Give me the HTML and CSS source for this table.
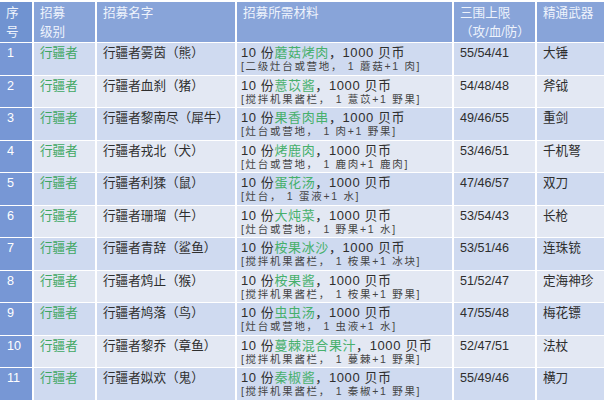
FILE: index.html
```html
<!DOCTYPE html>
<html lang="zh">
<head>
<meta charset="utf-8">
<link rel="stylesheet" href="styles.css">
</head>
<body>
<table class="tbl">
  <colgroup>
    <col class="c1"><col class="c2"><col class="c3"><col class="c4"><col class="c5"><col class="c6">
  </colgroup>
  <thead>
    <tr>
      <th class="num">序号</th>
      <th>招募<br>级别</th>
      <th>招募名字</th>
      <th>招募所需材料</th>
      <th>三围上限<br>（攻/血/防）</th>
      <th>精通武器</th>
    </tr>
  </thead>
  <tbody>
    <tr class="odd"><td class="num">1</td><td class="lvl">行疆者</td><td>行疆者雾茵（熊）</td><td class="mat">10 份<span class="food">蘑菇烤肉</span>，1000 贝币<div class="sub">[二级灶台或营地， 1 蘑菇+1 肉]</div></td><td>55/54/41</td><td>大锤</td></tr>
    <tr class="even"><td class="num">2</td><td class="lvl">行疆者</td><td>行疆者血刹（猪）</td><td class="mat">10 份<span class="food">薏苡酱</span>，1000 贝币<div class="sub">[搅拌机果酱栏， 1 薏苡+1 野果]</div></td><td>54/48/48</td><td>斧钺</td></tr>
    <tr class="odd"><td class="num">3</td><td class="lvl">行疆者</td><td>行疆者黎南尽（犀牛）</td><td class="mat">10 份<span class="food">果香肉串</span>，1000 贝币<div class="sub">[灶台或营地， 1 肉+1 野果]</div></td><td>49/46/55</td><td>重剑</td></tr>
    <tr class="even"><td class="num">4</td><td class="lvl">行疆者</td><td>行疆者戎北（犬）</td><td class="mat">10 份<span class="food">烤鹿肉</span>，1000 贝币<div class="sub">[灶台或营地， 1 鹿肉+1 鹿肉]</div></td><td>53/46/51</td><td>千机弩</td></tr>
    <tr class="odd"><td class="num">5</td><td class="lvl">行疆者</td><td>行疆者利猱（鼠）</td><td class="mat">10 份<span class="food">蛋花汤</span>，1000 贝币<div class="sub">[灶台， 1 蛋液+1 水]</div></td><td>47/46/57</td><td>双刀</td></tr>
    <tr class="even"><td class="num">6</td><td class="lvl">行疆者</td><td>行疆者珊瑠（牛）</td><td class="mat">10 份<span class="food">大炖菜</span>，1000 贝币<div class="sub">[灶台或营地， 1 野果+1 水]</div></td><td>53/54/43</td><td>长枪</td></tr>
    <tr class="odd"><td class="num">7</td><td class="lvl">行疆者</td><td>行疆者青辞（鲨鱼）</td><td class="mat">10 份<span class="food">桉果冰沙</span>，1000 贝币<div class="sub">[搅拌机果酱栏， 1 桉果+1 冰块]</div></td><td>53/51/46</td><td>连珠铳</td></tr>
    <tr class="even"><td class="num">8</td><td class="lvl">行疆者</td><td>行疆者鸩止（猴）</td><td class="mat">10 份<span class="food">桉果酱</span>，1000 贝币<div class="sub">[搅拌机果酱栏， 1 桉果+1 野果]</div></td><td>51/52/47</td><td>定海神珍</td></tr>
    <tr class="odd"><td class="num">9</td><td class="lvl">行疆者</td><td>行疆者鸠落（鸟）</td><td class="mat">10 份<span class="food">虫虫汤</span>，1000 贝币<div class="sub">[灶台或营地， 1 虫液+1 水]</div></td><td>47/55/48</td><td>梅花镖</td></tr>
    <tr class="even"><td class="num">10</td><td class="lvl">行疆者</td><td>行疆者黎乔（章鱼）</td><td class="mat">10 份<span class="food">蔓棘混合果汁</span>，1000 贝币<div class="sub">[搅拌机果酱栏， 1 蔓棘+1 野果]</div></td><td>52/47/51</td><td>法杖</td></tr>
    <tr class="odd"><td class="num">11</td><td class="lvl">行疆者</td><td>行疆者姒欢（鬼）</td><td class="mat">10 份<span class="food">秦椒酱</span>，1000 贝币<div class="sub">[搅拌机果酱栏， 1 秦椒+1 野果]</div></td><td>55/49/46</td><td>横刀</td></tr>
  </tbody>
</table>
</body>
</html>
```
FILE: styles.css
```css
html, body {
  margin: 0;
  padding: 0;
  background: #ffffff;
  overflow: hidden;
}
body {
  font-family: "Liberation Sans", "Noto Sans CJK SC", sans-serif;
  padding-top: 2px;
}
.tbl {
  border-collapse: separate;
  border-spacing: 0;
  table-layout: fixed;
  width: 604px;
}
.c1 { width: 32px; }
.c2 { width: 63px; }
.c3 { width: 140px; }
.c4 { width: 217px; }
.c5 { width: 83px; }
.c6 { width: 69px; }

.tbl th, .tbl td {
  box-sizing: border-box;
  text-align: left;
  vertical-align: top;
  font-size: 12.6px;
  white-space: nowrap;
  overflow: hidden;
}
.tbl th {
  height: 39px;
  padding: 2px 6px 0;
  background: #88a4d9;
  color: #eef3fc;
  font-weight: normal;
  line-height: 19px;
}
.tbl th + th, .tbl td + td {
  border-left: 2px solid #ffffff;
}
.tbl th.num {
  background: #7093d1;
  padding-left: 6px;
  white-space: normal;
}
.tbl td {
  height: 32.5px;
  padding: 2px 6px 0;
  border-top: 1px solid #ffffff;
  line-height: 16px;
  color: #2e2e2e;
}
.tbl tr.odd td { background: #cfdaf0; }
.tbl tr.even td { background: #e3e8f3; }
.tbl tr td.num {
  background: #7797d5;
  color: #ffffff;
  padding-left: 7px;
}
.tbl td.lvl { color: #3fa763; }
.tbl td.mat {
  padding-left: 4px;
  font-size: 13px;
  letter-spacing: 0.6px;
}
.food { color: #47b06c; }
.sub {
  font-size: 10.5px;
  line-height: 11px;
  letter-spacing: 1.7px;
  color: #444444;
}
```
